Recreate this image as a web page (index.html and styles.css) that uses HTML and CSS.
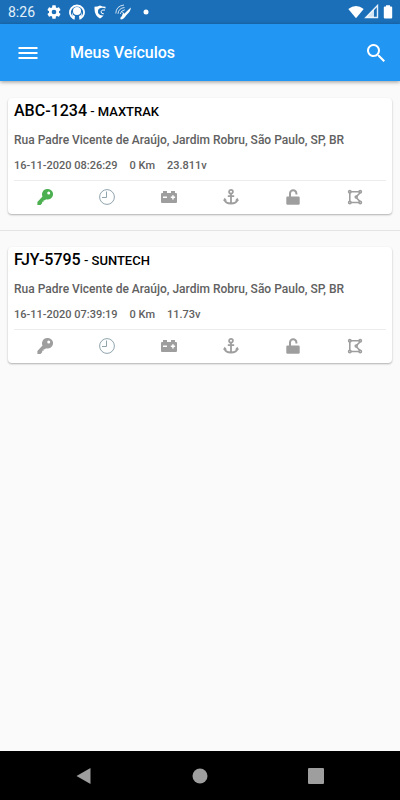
FILE: index.html
```html
<!DOCTYPE html>
<html lang="pt-BR">
<head>
    <meta charset="UTF-8">
    <meta name="viewport" content="width=device-width, initial-scale=1.0">
    <title>Meus Veículos</title>
    <link rel="stylesheet" href="styles.css">
</head>
<body>
    <!-- shared icons -->
    <svg class="sprite" aria-hidden="true">
        <symbol id="key" viewBox="0 0 16 16">
            <path fill-rule="evenodd" d="M10.500 0A5.300 5.300 0 1 1 9 10.300L8 11.300H6.600V12.800H5.200V14.200L3.500 16H.4V12.900L5.500 7.600A5.300 5.300 0 0 1 10.500 0ZM11.700 2.600a1.500 1.500 0 1 0 0 3a1.500 1.500 0 0 0 0-3Z"/>
        </symbol>
        <symbol id="clock" viewBox="0 0 16 16">
            <circle cx="8" cy="8" r="7.400" fill="none" stroke="#90a4ae"/>
            <path d="M7.500 2.500V8.500H3" fill="none" stroke="#90a4ae"/>
        </symbol>
        <symbol id="battery" viewBox="0 0 16 16">
            <path fill-rule="evenodd" d="M2 2h4v2h4V2h4v2h1q1 0 1 1v8q0 1-1 1H1q-1 0-1-1V5q0-1 1-1h1ZM2 7.500v1.500h4V7.500ZM11.200 6.200v1.300H9.800V9h1.400v1.400h1.500V9h1.400V7.500h-1.400V6.200Z"/>
        </symbol>
        <symbol id="anchor" viewBox="0 0 16 16">
            <g fill="none" stroke="currentColor" stroke-width="1.800">
                <circle cx="8" cy="2.800" r="1.900"/>
                <path d="M8 4.700V14.500M4.800 7.200h6.400M1.500 10.500C2 13 4.500 14.500 8 14.500S14 13 14.500 10.500"/>
            </g>
            <path d="M0 11.800L1.700 8.700L4 11.500ZM16 11.800L14.300 8.700L12 11.500Z"/>
        </symbol>
        <symbol id="unlock" viewBox="0 0 16 16">
            <path d="M2.500 7.500h11q1.200 0 1.200 1.200v5.800q0 1.200-1.200 1.200h-11q-1.200 0-1.200-1.200V8.700Q1.300 7.500 2.500 7.500Z"/>
            <path d="M5 8.500V4.500a3.200 3.200 0 0 1 6.400 0V5.500" fill="none" stroke="currentColor" stroke-width="2"/>
        </symbol>
        <symbol id="fence" viewBox="0 0 16 16">
            <g fill="none" stroke="currentColor" stroke-width="1.600">
                <path d="M2.800 3.800V12.500M4 2.800H12M4 13.500H12M13 4L9.500 7.300M9.500 9L13 12.400"/>
                <circle cx="2.800" cy="2.800" r="1.200"/>
                <circle cx="13.200" cy="2.800" r="1.200"/>
                <circle cx="9.200" cy="8.100" r="1"/>
                <circle cx="2.800" cy="13.500" r="1.200"/>
                <circle cx="13.200" cy="13.500" r="1.200"/>
            </g>
        </symbol>
    </svg>

    <div class="status-bar">
        <span class="time">8:26</span>
        <div class="notifications">
            <svg viewBox="0 0 24 24"><path fill-rule="evenodd" d="M19.430 12.980c.04-.32.07-.64.07-.98s-.03-.66-.07-.98l2.110-1.650c.19-.15.24-.42.12-.64l-2-3.460c-.12-.22-.39-.3-.61-.22l-2.490 1c-.52-.4-1.080-.73-1.690-.98l-.38-2.650C14.460 2.180 14.250 2 14 2h-4c-.25 0-.46.18-.49.42l-.38 2.650c-.61.25-1.170.59-1.690.98l-2.490-1c-.23-.09-.49 0-.61.22l-2 3.460c-.13.22-.07.49.12.64l2.110 1.650c-.04.32-.07.65-.07.98s.03.66.07.98l-2.110 1.650c-.19.15-.24.42-.12.64l2 3.460c.12.22.39.3.61.22l2.490-1c.52.4 1.080.73 1.690.98l.38 2.650c.03.24.24.42.49.42h4c.25 0 .46-.18.49-.42l.38-2.650c.61-.25 1.170-.59 1.690-.98l2.490 1c.23.09.49 0 .61-.22l2-3.460c.12-.22.07-.49-.12-.64ZM12 15.500a3.500 3.500 0 1 1 0-7a3.500 3.500 0 0 1 0 7Z"/></svg>
            <svg viewBox="0 0 16 16">
                <path d="M5 14.800A7 7 0 1 1 11 14.800" fill="none" stroke="currentColor" stroke-width="1.800"/>
                <circle cx="8" cy="7" r="4"/>
                <path d="M3 8Q3.500 11 6 12L5.500 15.800L3.500 14.500ZM13 8Q12.500 11 10 12L10.500 15.800L12.500 14.500Z"/>
            </svg>
            <svg viewBox="0 0 16 16">
                <path d="M2.500 2.800Q5.500 2.800 8 1.500Q10.500 2.800 13.500 2.800V4.500Q10 3 7.500 4.500Q5.300 6 6.200 9.200Q8 12 11.500 11.500Q10 13.500 8 14.500Q2.500 11.500 2.500 5Z"/>
                <path d="M13 6Q9.500 5.200 9 7.800Q9.200 10 11.800 9.800" fill="none" stroke="currentColor"/>
            </svg>
            <svg viewBox="0 0 16 16">
                <path d="M15.800 3.500Q16 7 11.500 11Q8.500 15.500 5.800 15.500Q4.500 13.800 7 12Q8 7.500 9 10Q12 7 15.800 3.500Z"/>
                <path d="M.8 9.500Q1 2 9 1M3 9.800Q3.500 4.200 9.500 3.500M5.200 10Q5.800 6.500 9.800 5.800M7 7.500L9.500 10.500" fill="none" stroke="currentColor" stroke-width=".8"/>
            </svg>
            <svg viewBox="0 0 16 16"><circle cx="8" cy="8" r="2.500"/></svg>
        </div>
        <div class="system">
            <svg viewBox="0 0 16 16"><path d="M.3 5Q8-1.200 15.700 5L8 14.300Z"/></svg>
            <svg viewBox="0 0 16 16">
                <path d="M13.500 1.500V13.500H1.800Z" fill="#1a6fb8" stroke="#e3effa" stroke-width="1.400"/>
                <path d="M10 5V13.500H2Z" opacity=".8"/>
            </svg>
            <svg viewBox="0 0 16 16"><path d="M6 1.200h4v1.300h1.200q1 0 1 1v10q0 1-1 1H4.800q-1 0-1-1v-10q0-1 1-1H6Z"/></svg>
        </div>
    </div>

    <header class="app-bar">
        <button class="bar-btn" aria-label="Menu">
            <svg viewBox="0 0 24 24"><path d="M2.500 6h19v2h-19zM2.500 11h19v2h-19zM2.500 16h19v2h-19z"/></svg>
        </button>
        <h1>Meus Veículos</h1>
        <button class="bar-btn" aria-label="Buscar">
            <svg viewBox="0 0 24 24"><path d="M15.500 14h-.79l-.28-.27A6.500 6.500 0 1 0 13.730 14.430l.27.28v.79l5.500 5.500L21 19.500ZM9.500 14a4.500 4.500 0 1 1 0-9a4.500 4.500 0 0 1 0 9Z"/></svg>
        </button>
    </header>

    <main class="vehicles">
        <article class="card">
            <h2>ABC-1234<span class="dash"> - </span><span class="model">MAXTRAK</span></h2>
            <p class="address">Rua Padre Vicente de Araújo, Jardim Robru, São Paulo, SP, BR</p>
            <p class="info"><span>16-11-2020 08:26:29</span><span>0 Km</span><span>23.811v</span></p>
            <div class="actions">
                <button class="on" aria-label="Ignição"><svg><use href="#key"/></svg></button>
                <button aria-label="Histórico"><svg><use href="#clock"/></svg></button>
                <button aria-label="Bateria"><svg><use href="#battery"/></svg></button>
                <button aria-label="Âncora"><svg><use href="#anchor"/></svg></button>
                <button aria-label="Bloqueio"><svg><use href="#unlock"/></svg></button>
                <button aria-label="Cerca"><svg><use href="#fence"/></svg></button>
            </div>
        </article>
        <hr>
        <article class="card">
            <h2>FJY-5795<span class="dash"> - </span><span class="model">SUNTECH</span></h2>
            <p class="address">Rua Padre Vicente de Araújo, Jardim Robru, São Paulo, SP, BR</p>
            <p class="info"><span>16-11-2020 07:39:19</span><span>0 Km</span><span>11.73v</span></p>
            <div class="actions">
                <button aria-label="Ignição"><svg><use href="#key"/></svg></button>
                <button aria-label="Histórico"><svg><use href="#clock"/></svg></button>
                <button aria-label="Bateria"><svg><use href="#battery"/></svg></button>
                <button aria-label="Âncora"><svg><use href="#anchor"/></svg></button>
                <button aria-label="Bloqueio"><svg><use href="#unlock"/></svg></button>
                <button aria-label="Cerca"><svg><use href="#fence"/></svg></button>
            </div>
        </article>
    </main>

    <nav class="nav-bar">
        <button aria-label="Voltar"><svg viewBox="0 0 16 16"><path d="M.5 8L14.500 0V16Z"/></svg></button>
        <button aria-label="Início"><svg viewBox="0 0 16 16"><circle cx="8" cy="8" r="7.500"/></svg></button>
        <button aria-label="Recentes"><svg viewBox="0 0 16 16"><rect width="16" height="16" rx="1"/></svg></button>
    </nav>
</body>
</html>
```

FILE: styles.css
```css
* {
    margin: 0;
    padding: 0;
    box-sizing: border-box;
}

body {
    display: flex;
    flex-direction: column;
    min-height: 100vh;
    background: #fafafa;
    color: #000;
    font-family: Roboto, sans-serif;
}

button {
    display: flex;
    align-items: center;
    justify-content: center;
    background: none;
    border: none;
    color: inherit;
    cursor: pointer;
}

svg {
    display: block;
    width: 16px;
    height: 16px;
    fill: currentColor;
}

.sprite {
    position: absolute;
    width: 0;
    height: 0;
}

/* status bar */
.status-bar {
    display: flex;
    align-items: center;
    height: 24px;
    padding: 0 4px 0 8px;
    background: #1a6fb8;
    color: #fff;
}

.time {
    font-size: 14px;
    line-height: 24px;
    color: #e3effa;
}

.notifications {
    display: flex;
    gap: 7px;
    margin-left: 11px;
}

.system {
    display: flex;
    margin-left: auto;
}

/* app bar */
.app-bar {
    display: flex;
    align-items: center;
    height: 57px;
    padding: 0 12px 0 16px;
    background: #2196f3;
    color: #fff;
    box-shadow: 0 1px 4px rgba(0, 0, 0, 0.4);
}

.app-bar h1 {
    flex: 1;
    margin-left: 30px;
    font-size: 16px;
    font-weight: 500;
    line-height: 24px;
}

.bar-btn svg {
    width: 24px;
    height: 24px;
}

/* vehicle list */
.vehicles {
    flex: 1;
    padding-top: 17px;
}

.vehicles hr {
    border: none;
    border-top: 1px solid #e4e4e4;
    margin: 16px 0;
}

.card {
    margin: 0 8px;
    padding: 3px 6px 2px;
    background: #fff;
    border-radius: 4px;
    box-shadow: 0 1px 2px rgba(0, 0, 0, 0.3);
}

.card h2 {
    font-size: 16px;
    font-weight: 500;
    line-height: 20px;
}

.card .dash {
    font-size: 14px;
    font-weight: 400;
}

.card .model {
    font-size: 13px;
}

.address {
    margin-top: 8px;
    font-size: 12px;
    font-weight: 500;
    line-height: 20px;
    color: #616161;
}

.info {
    display: flex;
    gap: 12px;
    margin-top: 6px;
    font-size: 11px;
    font-weight: 500;
    line-height: 20px;
    color: #616161;
}

.actions {
    display: flex;
    margin-top: 4px;
    border-top: 1px solid #ececec;
}

.actions button {
    flex: 1;
    height: 31px;
    color: #9e9e9e;
}

.actions .on {
    color: #4caf50;
}

/* navigation bar */
.nav-bar {
    display: flex;
    justify-content: space-between;
    height: 49px;
    padding: 0 76px;
    background: #000;
    color: #9e9e9e;
}
```
